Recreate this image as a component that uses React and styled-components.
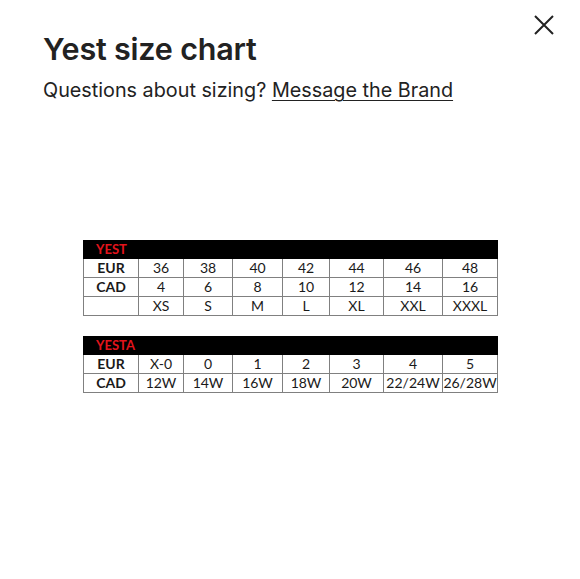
import React from "react";
import styled, { createGlobalStyle } from "styled-components";

const Global = createGlobalStyle`
  html, body { margin: 0; padding: 0; background: #fff; }
  body { font-family: Inter, "Noto Sans", sans-serif; color: #222; }
`;

const Page = styled.div`
  position: relative;
  width: 580px;
  height: 579px;
  box-sizing: border-box;
  padding: 30px 0 0 43px;
  display: flex;
  flex-direction: column;
`;

const Title = styled.h1`
  margin: 0;
  font-size: 30.5px;
  line-height: 37px;
  font-weight: 600;
  color: #222;
  letter-spacing: -0.2px;
`;

const Sub = styled.p`
  margin: 10px 0 0;
  font-size: 19.8px;
  line-height: 26px;
  font-weight: 400;
  color: #222;
`;

const Link = styled.a`
  color: #222;
  text-decoration: underline;
  text-underline-offset: 3px;
  text-decoration-thickness: 1px;
  cursor: pointer;
`;

const Close = styled.button`
  position: absolute;
  top: 14px;
  right: 25px;
  width: 22px;
  height: 22px;
  padding: 0;
  border: 0;
  background: none;
  cursor: pointer;
`;

const Charts = styled.div`
  margin: 137px 0 0 40px;
  display: flex;
  flex-direction: column;
  gap: 20px;
`;

const Table = styled.table`
  border-collapse: collapse;
  table-layout: fixed;
  width: 414px;
  font-family: Lato, "Open Sans", sans-serif;
  font-size: 14px;
  color: #1a1a1a;
`;

const HeadCell = styled.th`
  background: #000;
  color: #e3141c;
  height: 17px;
  padding: 0 0 0 12px;
  text-align: left;
  font-size: 13px;
  font-weight: 700;
  line-height: 17px;
  border: 1px solid #000;
`;

const Cell = styled.td`
  border: 1px solid #808080;
  height: 18px;
  padding: 0;
  text-align: center;
  line-height: 18px;
  font-weight: ${(p) => (p.$bold ? 700 : 400)};
  white-space: nowrap;
`;

const widths = [55, 45, 49, 50, 47, 54, 59, 55];

function Chart({ name, rows }) {
  return (
    <Table>
      <colgroup>
        {widths.map((w, i) => (
          <col key={i} style={{ width: w }} />
        ))}
      </colgroup>
      <thead>
        <tr>
          <HeadCell colSpan={8}>{name}</HeadCell>
        </tr>
      </thead>
      <tbody>
        {rows.map((r, i) => (
          <tr key={i}>
            {r.map((c, j) => (
              <Cell key={j} $bold={j === 0}>
                {c}
              </Cell>
            ))}
          </tr>
        ))}
      </tbody>
    </Table>
  );
}

export default function App() {
  return (
    <>
      <Global />
      <Page>
        <Close aria-label="Close">
          <svg width="22" height="22" viewBox="0 0 22 22">
            <path d="M2 2 L20 20 M20 2 L2 20" stroke="#222" strokeWidth="2" fill="none" />
          </svg>
        </Close>
        <Title>Yest size chart</Title>
        <Sub>
          Questions about sizing? <Link>Message the Brand</Link>
        </Sub>
        <Charts>
          <Chart
            name="YEST"
            rows={[
              ["EUR", "36", "38", "40", "42", "44", "46", "48"],
              ["CAD", "4", "6", "8", "10", "12", "14", "16"],
              ["", "XS", "S", "M", "L", "XL", "XXL", "XXXL"],
            ]}
          />
          <Chart
            name="YESTA"
            rows={[
              ["EUR", "X-0", "0", "1", "2", "3", "4", "5"],
              ["CAD", "12W", "14W", "16W", "18W", "20W", "22/24W", "26/28W"],
            ]}
          />
        </Charts>
      </Page>
    </>
  );
}
